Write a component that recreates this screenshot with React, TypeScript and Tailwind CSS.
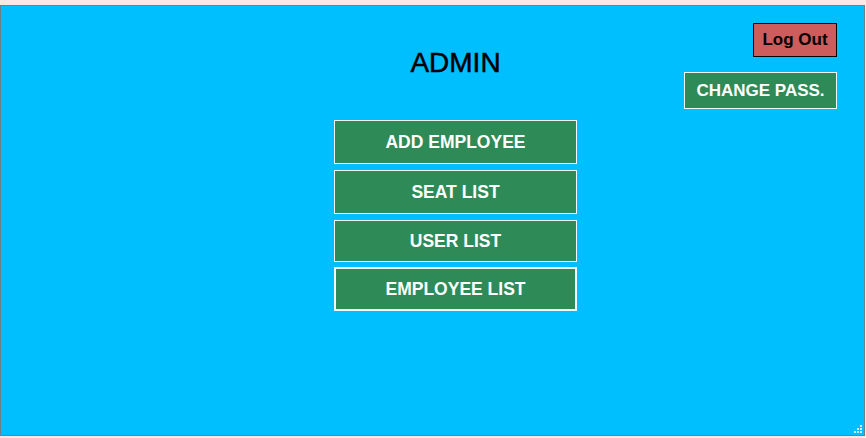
export default function App() {
  const items = [
    { t: "ADD EMPLOYEE", c: "h-[44px] border border-[#f0f8ff]" },
    { t: "SEAT LIST", c: "mt-[6px] h-[44px] border border-[#f0f8ff]" },
    { t: "USER LIST", c: "mt-[6px] h-[42px] border border-[#f0f8ff]" },
    { t: "EMPLOYEE LIST", c: "mt-[5px] h-[44px] border-2 border-[#f0f8ff]" },
  ];
  return (
    <div className="w-[866px] h-[438px] bg-[#fce8e3] pt-[5px] pb-[2px] overflow-hidden" style={{ fontFamily: '"Liberation Sans", Arial, sans-serif' }}>
      <div className="relative w-[865px] h-[431px] border border-[#6d8088] bg-[#00bfff] grid grid-cols-[333px_243px_1fr]">
        <div />
        <div className="flex flex-col items-center">
          <h1 className="mt-[38px] h-[38px] text-[28px] leading-[38px] text-black [-webkit-text-stroke:0.5px_black]">ADMIN</h1>
          <div className="mt-[38px] flex flex-col w-full">
            {items.map((it) => (
              <button
                key={it.t}
                className={`w-[243px] bg-[#2e8b57] text-white text-[17.5px] font-bold ${it.c}`}
              >
                {it.t}
              </button>
            ))}
          </div>
        </div>
        <div className="flex flex-col items-end pr-[27px] pt-[17px]">
          <button className="w-[84px] h-[34px] bg-[#cd5c5c] border border-black text-black text-[17px] font-bold">Log Out</button>
          <button className="mt-[15px] w-[153px] h-[37px] bg-[#2e8b57] border border-[#f0f8ff] text-white text-[17px] font-bold">CHANGE PASS.</button>
        </div>
        <div className="absolute right-[2px] bottom-[2px] grid grid-cols-3 gap-[1px] w-[8px] h-[8px]">
          <span />
          <span />
          <span className="w-[2px] h-[2px] bg-[#dfefff]" />
          <span />
          <span className="w-[2px] h-[2px] bg-[#dfefff]" />
          <span className="w-[2px] h-[2px] bg-[#dfefff]" />
          <span className="w-[2px] h-[2px] bg-[#dfefff]" />
          <span className="w-[2px] h-[2px] bg-[#dfefff]" />
          <span className="w-[2px] h-[2px] bg-[#dfefff]" />
        </div>
      </div>
    </div>
  );
}
